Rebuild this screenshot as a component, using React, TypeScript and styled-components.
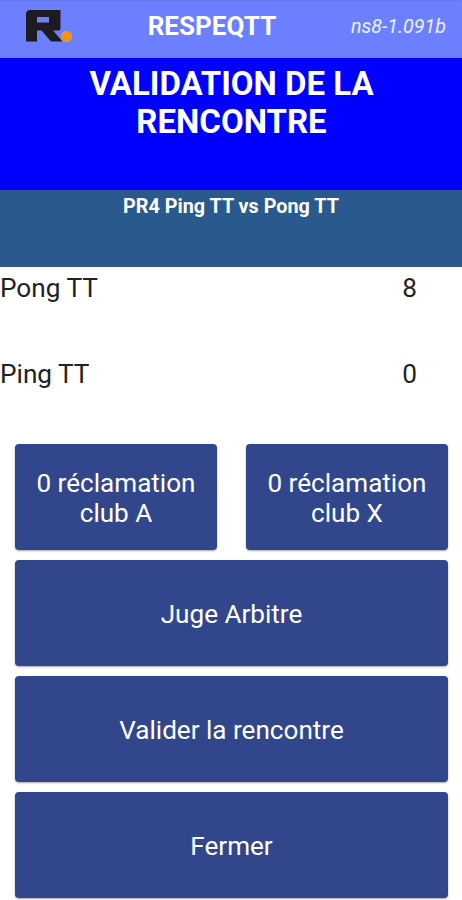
import React from "react";
import styled, { createGlobalStyle } from "styled-components";

const GlobalStyle = createGlobalStyle`
  * { box-sizing: border-box; }
  body { margin: 0; background: #fff; font-family: Roboto, sans-serif; overflow: hidden; }
`;

const Screen = styled.main`
  width: 462px;
  height: 900px;
  display: flex;
  flex-direction: column;
  background: #fff;
`;

const TopBar = styled.header`
  height: 58px;
  display: grid;
  grid-template-columns: 97px 230px 1fr;
  align-items: center;
  background: linear-gradient(#6878e8 0, #6c80ff 3px);
  color: #fff;
  padding-bottom: 6px;
`;

const Logo = styled.svg`
  width: 50px;
  height: 36px;
  margin-left: 25px;
`;

const AppName = styled.div`
  font-size: 26px;
  line-height: 30px;
  font-weight: 700;
  text-align: center;
  white-space: nowrap;
`;

const Version = styled.div`
  color: #eaf2ff;
  font-size: 19.7px;
  font-style: italic;
  text-align: right;
  padding: 1px 16px 0 0;
`;

const Title = styled.h1`
  margin: 0;
  height: 132px;
  padding: 7px 59px 0 60px;
  background: #0000ff;
  color: #fff;
  font-size: 33px;
  line-height: 38px;
  font-weight: 700;
  text-align: center;
`;

const Match = styled.div`
  height: 77px;
  padding-top: 5px;
  background: #2a598e;
  color: #fff;
  font-size: 19.8px;
  line-height: 23px;
  font-weight: 700;
  text-align: center;
`;

const ScoreRow = styled.div`
  height: 86px;
  display: flex;
  justify-content: space-between;
  padding: 6px 45px 0 0;
  color: #222;
  font-size: 26.2px;
  line-height: 31px;
`;

const Actions = styled.div`
  margin-top: 5px;
  padding: 0 14px 0 15px;
  display: grid;
  grid-template-columns: 1fr 1fr;
  grid-auto-rows: 106px;
  column-gap: 29px;
  row-gap: 10px;
`;

const Button = styled.button<{ $wide?: boolean }>`
  grid-column: ${(p) => (p.$wide ? "1 / -1" : "auto")};
  border: 0;
  border-radius: 4px;
  padding: 1px 16px 0;
  background: #32468c;
  color: #fff;
  font: 400 26.1px/30px Roboto, sans-serif;
  box-shadow: 0 1px 2px rgba(0, 0, 0, 0.35);
`;

export default function App() {
  return (
    <>
      <GlobalStyle />
      <Screen>
        <TopBar>
          <Logo viewBox="0 0 50 36">
            <path
              fillRule="evenodd"
              fill="#1d1b20"
              d="M5 2H35.500V20.500Q35.500 22.500 33.500 22.500H28L37.500 33.500H26L16.500 22.500H12V33.500H1V6.500Q1 2 5 2ZM12 9V14.500H24V9Z"
            />
            <circle cx="41.500" cy="28.500" r="5.800" fill="#ed9420" />
          </Logo>
          <AppName>RESPEQTT</AppName>
          <Version>ns8-1.091b</Version>
        </TopBar>
        <Title>VALIDATION DE LA RENCONTRE</Title>
        <Match>PR4 Ping TT vs Pong TT</Match>
        <ScoreRow><span>Pong TT</span><span>8</span></ScoreRow>
        <ScoreRow><span>Ping TT</span><span>0</span></ScoreRow>
        <Actions>
          <Button>0 réclamation club A</Button>
          <Button>0 réclamation club X</Button>
          <Button $wide>Juge Arbitre</Button>
          <Button $wide>Valider la rencontre</Button>
          <Button $wide>Fermer</Button>
        </Actions>
      </Screen>
    </>
  );
}
